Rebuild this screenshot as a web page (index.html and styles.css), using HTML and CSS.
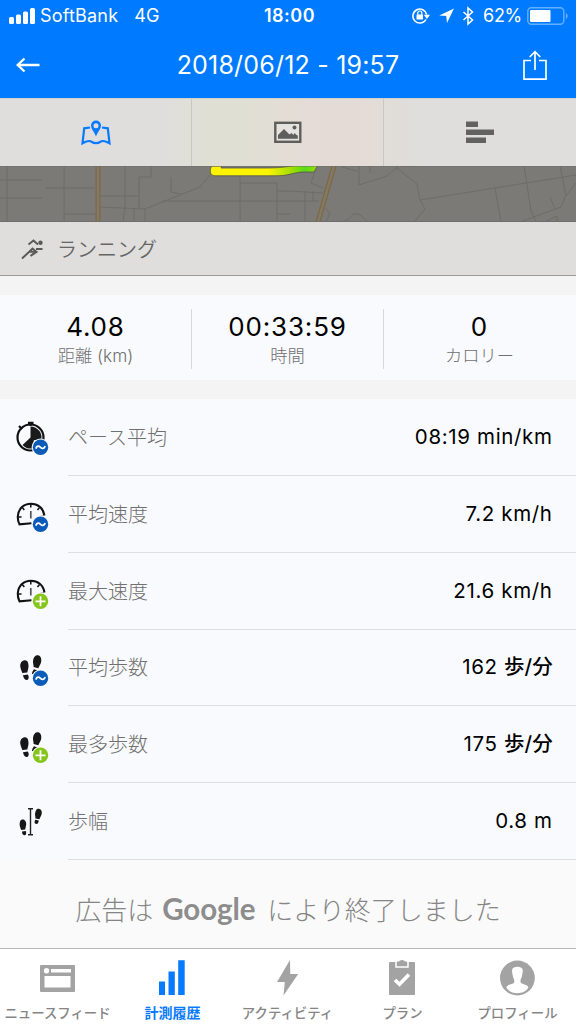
FILE: index.html
```html
<!DOCTYPE html>
<html lang="ja">
<head>
<meta charset="utf-8">
<title>2018/06/12 - 19:57</title>
<link rel="stylesheet" href="styles.css">
</head>
<body>
<svg width="0" height="0" class="defs" aria-hidden="true">
  <defs>
    <g id="average"><circle cx="30.5" cy="30.3" r="8.8" fill="#f9fafd"/><circle cx="30.5" cy="30.3" r="7.7" fill="#0b5cb8"/><path d="M25.8 31.600c1.3-3.2 3-2.8 4.7-1.3s3.400 1.700 4.700-1.200" fill="none" stroke="#fff" stroke-width="1.8"/></g>
    <g id="maximum"><circle cx="30.500" cy="30.300" r="8.800" fill="#f9fafd"/><circle cx="30.500" cy="30.300" r="7.700" fill="#86c51b"/><path d="M25.500 30.300h10M30.500 25.300v10" stroke="#fff" stroke-width="1.800"/></g>
    <g id="gauge"><path d="M21.500 29.300 9.500 30.400Q7.600 26.500 7.800 22.500C8.300 14.500 14 9.700 20.800 9.700S33.500 14 34.400 21.500" fill="none" stroke="#111" stroke-width="2.100"/><path d="M20.800 10v3.500M12.300 13.500l2 2.500M29.500 13.500l-2 2.500M8.500 23h3M30.300 22.500h3" stroke="#111" stroke-width="1.500"/><path d="M20.800 17v7.500" stroke="#555" stroke-width="1.700"/></g>
    <g id="feet" fill="#171717"><path d="M14.500 7.900c2.800-.5 4.200 2.500 4 6.200-.2 2.400-.8 4-1.200 6l-5 .7c-.5-2-1.800-4-2-6.500-.4-3.500 1.500-6 4.200-6.400Z"/><path d="m13 23 4.800-.7c1.500 2.300 1 5-.8 5.400-2.300.5-3.500-2-4-4.700Z"/><path d="M27.500 2.900c2.800 0 4 2.700 3.800 5.800-.2 3-2 4.700-3 7.300l-4.700-1.300c.1-2.300-1-4.100-.5-6.700.5-3 2-5.100 4.400-5.100Z"/><path d="m24 17 3.500 1.200-1.500 4-4-.5c.1-2 1-3.500 2-4.700Z"/></g>
  </defs>
</svg>
<div class="screen">
  <header class="header">
    <div class="status">
      <div class="status-left">
        <svg width="26" height="16" viewBox="0 0 26 16" fill="#fff"><rect y="9" width="5" height="7" rx="1.500"/><rect x="7" y="6.500" width="5" height="9.500" rx="1.500"/><rect x="14" y="3.500" width="5" height="12.500" rx="1.500"/><rect x="21" width="5" height="16" rx="1.500"/></svg>
        <span class="carrier">SoftBank</span><span class="network">4G</span>
      </div>
      <span class="clock">18:00</span>
      <div class="status-right">
        <svg width="64" height="20" viewBox="0 0 64 20"><path d="M15 13.500a7 7 0 1 1 .7-5" fill="none" stroke="#fff" stroke-width="1.500"/><path d="M12.800 8.800h6.200l-3.100 4.200z" fill="#fff"/><rect x="5.500" y="8.500" width="6.500" height="5" rx=".5" fill="#fff"/><path d="M6.800 9V7a2 2 0 0 1 4 0v2" fill="none" stroke="#fff" stroke-width="1.200"/><path d="M43 2.500 36 17l-.8-7-7-.6z" fill="#fff"/><path d="m52.500 6 9 8-4.500 4V2l4.500 4-9 8" fill="none" stroke="#fff" stroke-width="1.500"/></svg>
        <span class="percent">62%</span>
        <svg width="41" height="18" viewBox="0 0 41 18"><rect x=".8" y=".8" width="36" height="16.400" rx="3.500" fill="none" stroke="#66afff" stroke-width="1.400"/><rect x="3" y="3" width="20.500" height="12" rx="1" fill="#fff"/><path d="M38.800 6q4 3 0 6z" fill="#66afff"/></svg>
      </div>
    </div>
    <div class="nav">
      <svg width="24" height="16" viewBox="0 0 24 16"><path d="M23.500 8H2M8.500 1.500 1.700 8l6.800 6.500" fill="none" stroke="#fff" stroke-width="2.300"/></svg>
      <h1>2018/06/12 - 19:57</h1>
      <svg width="24" height="31" viewBox="0 0 24 31"><path d="M8 10.500H1v18.700h22V10.500h-7M12 20V2M6.700 7 12 1.700 17.300 7" fill="none" stroke="#fff" stroke-width="1.700"/></svg>
    </div>
  </header>

  <nav class="views">
    <div class="view"><svg width="30" height="26" viewBox="0 0 30 26"><path d="M9 7.500 3.200 8.300 1.500 23.300Q8 19.800 10.500 21.700 15 24.500 19.500 21.700 22 19.800 28.500 23.300L26.800 8.300 21 7.500" fill="none" stroke="#087aff" stroke-width="2.200"/><path fill-rule="evenodd" fill="#087aff" d="M15 .5a5 5 0 0 1 5 5c0 3.500-3.200 6.200-5 11-1.800-4.800-5-7.500-5-11a5 5 0 0 1 5-5Zm0 2.700a2.500 2.500 0 1 0 0 5 2.500 2.500 0 0 0 0-5Z"/></svg></div>
    <div class="view"><svg width="28" height="23" viewBox="0 0 28 23"><rect x="1.300" y="1.800" width="25" height="19" fill="#e5e3df" stroke="#5e5e5d" stroke-width="2.400"/><path d="M4 17.800V14l6-6 5.500 5.500 2-1.500 2 2 1-2 2 2 1.300.5v3.300z" fill="#5e5e5d"/><circle cx="20.500" cy="6.500" r="2" fill="#5e5e5d"/></svg></div>
    <div class="view"><svg width="28" height="23" viewBox="0 0 28 23" fill="#626261"><path d="M0 .5h12V6H0zM0 8.500h28V14H0zM0 16.500h20V22H0z"/></svg></div>
  </nav>

  <div class="map">
    <svg width="576" height="56" viewBox="0 0 576 56">
      <defs><linearGradient id="track" x1="211" x2="318" y1="0" y2="0" gradientUnits="userSpaceOnUse"><stop offset=".53" stop-color="#fff400"/><stop offset=".74" stop-color="#a6df00"/><stop offset=".88" stop-color="#58db18"/><stop offset="1" stop-color="#a4df00"/></linearGradient></defs>
      <path d="M7 0v56M0 14h42M0 32h42M45 22h50M64 0v56M64 48h32M125 0v40l-2 16M100 30h39M100 41l45 2M139 43V11h12V0M134 43v13M145 43v13M145 43 200 21 213 5M162 35h142M171 11v15l10 2M240 8v48M240 17h37v39M277 25h11l35 2M305 25v31M313 25v10M304 35h15M277 48h13M316 2l-5 15 12 5M325 42l5 5-4 9M342 1l15 4M359 0v19l28-9 10-9M370 0v7M397 0v4M397 2l20 16 3 16 5 9-11 13M400 0h15M420 34 576 9M495 22l6 34M524 0l7 45 5 11M560 0l6 30M576 17l-11 14-4 10-41 15M550 31l5 12M341 56l8-3 4-5h6l9 8M544 56l13-6v6" fill="none" stroke="#6c6b66" stroke-width=".9"/>
      <path d="M98 0v56M334 0 318 56" stroke="#806744" stroke-width="5"/><path d="M98 0v56M334 0 318 56" stroke="#807b66" stroke-width="2.500"/>
      <path d="M212 0h10l-1 2h44c20 0 23-2 35-3h18l-4 7h-12c-15 2-13 3.800-28 3.800h-59c-6 0-5.500-7-3-9.800z" fill="url(#track)" stroke="#53534c" stroke-width=".8"/>
      <path d="M0 0h576M0 55.500h576" stroke="#6f6e6a"/>
    </svg>
  </div>

  <div class="activity">
    <svg width="22" height="22" viewBox="0 0 22 22"><path d="M1 20.500 8.500 13.500l6 .5-5 4M8.500 13.500l3-3 4 3.500-6 4M15 11h6.500M7.500 6.500l5-4L17 6.500" fill="none" stroke="#595958" stroke-width="2"/><circle cx="19.500" cy="4.800" r="2.200" fill="#595958"/></svg>
    <span>ランニング</span>
  </div>

  <section class="summary">
    <div class="stat"><strong>4.08</strong><span>距離 (km)</span></div>
    <div class="stat"><strong>00:33:59</strong><span>時間</span></div>
    <div class="stat"><strong>0</strong><span>カロリー</span></div>
  </section>

  <section class="metrics">
    <div class="row"><svg class="icon" viewBox="0 0 40 40"><circle cx="20.500" cy="20.500" r="13" fill="none" stroke="#111" stroke-width="2.200"/><path d="M20.500 20.500V9.500A11 11 0 0 1 31 24l-7-1-2 8.500A11 11 0 0 1 12.500 28z" fill="#1a1a1a"/><path d="M18 5.800h5.500M20.500 5v4M9 9l3 3" stroke="#111" stroke-width="2.300"/><use href="#average"/></svg><div class="cell"><span class="label">ペース平均</span><span class="value">08:19 min/km</span></div></div>
    <div class="row"><svg class="icon" viewBox="0 0 40 40"><use href="#gauge"/><use href="#average"/></svg><div class="cell"><span class="label">平均速度</span><span class="value">7.2 km/h</span></div></div>
    <div class="row"><svg class="icon" viewBox="0 0 40 40"><use href="#gauge"/><use href="#maximum"/></svg><div class="cell"><span class="label">最大速度</span><span class="value">21.6 km/h</span></div></div>
    <div class="row"><svg class="icon" viewBox="0 0 40 40"><use href="#feet" y="4.300"/><use href="#average"/></svg><div class="cell"><span class="label">平均歩数</span><span class="value">162 <b>歩/分</b></span></div></div>
    <div class="row"><svg class="icon" viewBox="0 0 40 40"><use href="#feet" y="4.300"/><use href="#maximum"/></svg><div class="cell"><span class="label">最多歩数</span><span class="value">175 <b>歩/分</b></span></div></div>
    <div class="row"><svg class="icon" viewBox="0 0 40 40"><g transform="translate(.5 -.7)"><path d="M17.500 7.500h5M17.500 33.500h5M20 7.500v26" stroke="#222" stroke-width="1.400"/><g fill="#171717"><path d="M11.500 18.200c3-.5 4.500 2.500 4.200 5l-1 5-4 .5C9.500 26 9 24.500 9.200 22c.1-2 .9-3.500 2.300-3.800Zm0 12 3.800-.6q1.200 4-1.300 4.300c-1.800.3-2.500-2-2.500-3.700Z"/><path d="M27.500 7.500c3 0 4.200 2.300 3.700 5-.4 2.200-1.600 3.600-2.300 5.500l-4-.8c.2-1.900-.6-3.200-.3-5.200.5-2.700 1.500-4.500 2.900-4.500Zm-2.700 11 3.500.8c-.3 2.500-1.200 3.600-2.500 3.500-2-.2-2.200-2-1-4.300Z"/></g></g></svg><div class="cell"><span class="label">歩幅</span><span class="value">0.8 m</span></div></div>
  </section>

  <div class="ad"><span>広告は</span><b>Google</b><span>により終了しました</span></div>

  <nav class="tabbar">
    <div class="tab"><svg width="36" height="36" viewBox="0 0 36 36"><path fill="#a3a3a3" fill-rule="evenodd" d="M2 5h32q1 0 1 1v25q0 1-1 1H1q-1 0-1-1V6q0-1 1-1zM4.500 16v11.500h26V16zM11 9v3.500h20V9zM6.500 8a2.700 2.700 0 1 0 0 5.400A2.700 2.700 0 0 0 6.500 8z"/></svg><span>ニュースフィード</span></div>
    <div class="tab active"><svg width="36" height="36" viewBox="0 0 36 36" fill="#087aff"><path d="M4 21.500h6V35H4zM13.500 11.500h6.300V35h-6.300zM23.200.2h6.500V35h-6.500z"/></svg><span>計測履歴</span></div>
    <div class="tab"><svg width="36" height="36" viewBox="0 0 36 36" fill="#a3a3a3"><path d="M20 0 7 22h7.800L13.500 35.500 28.200 14h-7.900z"/></svg><span>アクティビティ</span></div>
    <div class="tab"><svg width="36" height="36" viewBox="0 0 36 36"><path d="M5 2h24q1 0 1 1v31q0 1-1 1H5q-1 0-1-1V3q0-1 1-1z" fill="#a3a3a3"/><path d="M11 1v6h12V1" fill="none" stroke="#fff" stroke-width="1.500"/><path d="M12 1.500h2q.5-1.500 3-1.500t3 1.500h2V5.500H12z" fill="#a3a3a3"/><path d="m10 20 4.500 4.300L24 14.500" fill="none" stroke="#fff" stroke-width="3.600"/></svg><span>プラン</span></div>
    <div class="tab"><svg width="36" height="36" viewBox="0 0 36 36"><g transform="translate(-.6)"><circle cx="18" cy="18" r="17.400" fill="#a3a3a3"/><path d="M12.800 9.500c.4-2 2.500-2.800 5.200-2.800s4.800.8 5.200 2.800c.5 2.500-.3 4-.5 6-.3 2-1.500 3.500-1.700 5.500l.5 2c3 1.500 7 2 7.500 4.500-2 3.800-6.500 5.700-11 5.700S9 31.300 7 27.500c.5-2.500 4.500-3 7.500-4.500l.5-2c-.2-2-1.400-3.500-1.700-5.500-.2-2-1-3.500-.5-6Z" fill="#fff"/></g></svg><span>プロフィール</span></div>
  </nav>
</div>
</body>
</html>
```
FILE: styles.css
```css
* { box-sizing: border-box; }
body { margin: 0; background: #f4f4f4; font-family: Inter, "Noto Sans CJK JP", sans-serif; }
svg { display: block; flex: none; }
.defs { height: 0; }
.screen { width: 576px; height: 1024px; display: flex; flex-direction: column; overflow: hidden; }
.header { height: 98px; flex: none; background: #007aff; color: #fff; }
.status { height: 32px; display: grid; grid-template-columns: 1fr auto 1fr; align-items: center; padding: 0 8px 0 9px; line-height: 22px; }
.status-left, .status-right { display: flex; align-items: center; }
.status-right { justify-content: flex-end; }
.carrier { margin-left: 5px; font-size: 18px; letter-spacing: .2px; }
.network { margin-left: 16px; font-size: 18px; }
.clock { padding-left: 2px; font-size: 18px; font-weight: 600; letter-spacing: .5px; }
.percent { margin: 0 5px 0 8px; font-size: 18px; letter-spacing: -.3px; }
.nav { height: 66px; display: flex; align-items: center; justify-content: space-between; padding: 0 29px 0 16px; }
.nav h1 { margin: 0 0 0 13px; font-size: 25px; font-weight: 400; letter-spacing: .2px; }
.views { height: 68px; flex: none; display: grid; grid-template-columns: repeat(3, 1fr); background: linear-gradient(90deg, #dfdedc 0 28%, #e0dfd4 36% 43%, #e5dbd6 56% 62%, #e0ddd8 68%, #dfdedc 75%); border-top: 1px solid #d3d1cd; }
.view { display: flex; align-items: center; justify-content: center; border-right: 1px solid #c8c7c3; }
.view:last-child { border-right-color: transparent; }
.map { height: 56px; flex: none; background: #7b7a76; }
.activity { height: 54px; flex: none; display: flex; align-items: center; gap: 14px; padding: 0 21px; background: #dfdedc; border-bottom: 1px solid #999; color: #666; font-size: 20px; font-weight: 350; }
.summary { height: 85px; flex: none; margin: 19px 0; padding: 14px 0 15px; display: grid; grid-template-columns: repeat(3, 1fr); background: #f9fafd; }
.stat { display: flex; flex-direction: column; align-items: center; padding-top: 3px; border-right: 1px solid #d7d8da; }
.stat:last-child { border-right-color: transparent; }
.stat strong { height: 29px; font-size: 26px; line-height: 30px; font-weight: 400; letter-spacing: .85px; color: #000; }
.stat span { padding-top: 1px; font-size: 17.300px; line-height: 27px; font-weight: 300; color: #707070; }
.metrics { height: 461px; flex: none; display: grid; grid-template-rows: repeat(6, 1fr); background: #f9fafd; }
.row { display: flex; align-items: center; padding-left: 10px; }
.icon { width: 40px; height: 40px; }
.cell { flex: 1; height: 100%; margin-left: 18px; padding-right: 24px; display: flex; align-items: center; justify-content: space-between; border-bottom: 1px solid #dedfe2; }
.label { color: #707070; font-size: 20px; line-height: 30px; padding-top: 2px; font-weight: 300; }
.value { color: #000; font-size: 20.500px; line-height: 30px; font-weight: 400; letter-spacing: .65px; margin-right: -.65px; }
.value b { font-weight: 500; letter-spacing: 0; }
.ad { height: 88px; flex: none; display: flex; align-items: center; justify-content: center; padding-top: 8px; background: #fafafa; color: #858585; font-size: 26px; font-weight: 300; }
.ad b { margin: 0 12px 0 9px; font-family: Lato, sans-serif; font-size: 29.500px; font-weight: 700; letter-spacing: -.1px; color: #8d8d8d; }
.tabbar { height: 76px; flex: none; display: grid; grid-template-columns: repeat(5, 115px); background: #fff; border-top: 1px solid #b8b8b8; }
.tab { min-width: 0; padding-top: 11px; display: flex; flex-direction: column; align-items: center; color: #858585; font-size: 14px; line-height: 20px; white-space: nowrap; }
.tab span { margin-top: 7px; font-size: 13.400px; font-weight: 500; }
.tab.active span { font-size: 14px; font-weight: 700; }
.active { color: #087aff; }
```
